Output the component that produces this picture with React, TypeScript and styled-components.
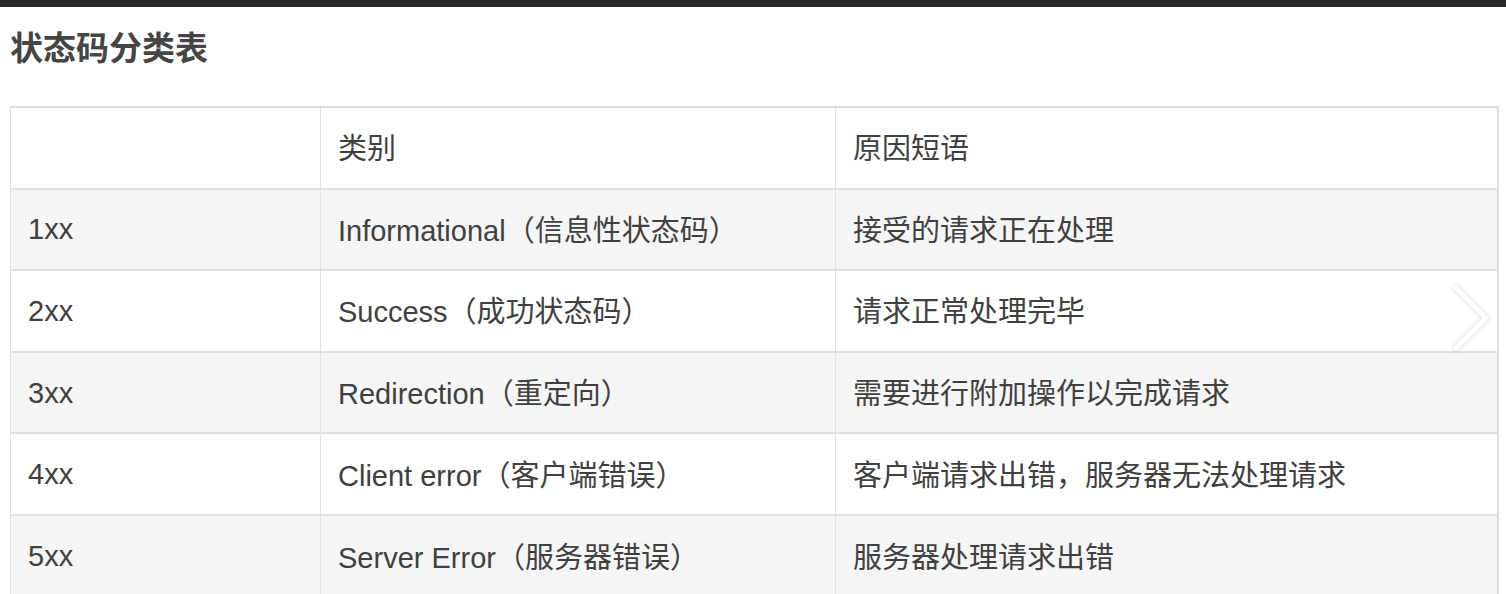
import React from "react";
import styled, { createGlobalStyle } from "styled-components";

const Global = createGlobalStyle`
  html, body { margin: 0; padding: 0; background: #fff; }
  body { font-family: "Liberation Sans", "Noto Sans CJK SC", sans-serif; overflow: hidden; }
`;

const Page = styled.div`
  width: 1506px;
  height: 594px;
  position: relative;
  overflow: hidden;
`;

const TopBar = styled.div`
  height: 7px;
  background: #2b2b2b;
`;

const Title = styled.h2`
  margin: 19px 0 40px 10px;
  font-size: 33px;
  line-height: 40px;
  font-weight: 700;
  color: #454545;
  font-family: "Noto Sans CJK SC", sans-serif;
`;

const TableWrap = styled.div`
  margin-left: 10px;
  width: 1489px;
  position: relative;
`;

const Table = styled.table`
  width: 100%;
  border-collapse: collapse;
  border-top: 2px solid #dedede;
  border-left: 1px solid #dedede;
  border-right: 2px solid #dedede;
  table-layout: fixed;
`;

const Row = styled.tr<{ $alt?: boolean }>`
  height: 81.6px;
  background: ${(p) => (p.$alt ? "#f5f5f5" : "#ffffff")};
  & + & { border-top: 2px solid #e0e0e0; }
`;

const Cell = styled.td`
  padding: 0 0 0 17px;
  border-left: 1px solid #e2e2e2;
  font-size: 29px;
  line-height: 40px;
  color: #404040;
  vertical-align: middle;
  white-space: nowrap;
  font-family: "Liberation Sans", "Noto Sans CJK SC", sans-serif;
  &:first-child { border-left: none; }
`;

const Cjk = styled.span`
  font-family: "Noto Sans CJK SC", sans-serif;
  font-size: 29px;
  line-height: 40px;
`;

const Chevron = styled.svg`
  position: absolute;
  right: 5px;
  top: 177px;
  filter: drop-shadow(0 0 2px rgba(0, 0, 0, 0.18));
`;

const rows = [
  { code: "1xx", en: "Informational", zh: "（信息性状态码）", reason: "接受的请求正在处理" },
  { code: "2xx", en: "Success", zh: "（成功状态码）", reason: "请求正常处理完毕" },
  { code: "3xx", en: "Redirection", zh: "（重定向）", reason: "需要进行附加操作以完成请求" },
  { code: "4xx", en: "Client error", zh: "（客户端错误）", reason: "客户端请求出错，服务器无法处理请求" },
  { code: "5xx", en: "Server Error", zh: "（服务器错误）", reason: "服务器处理请求出错" },
];

export default function App() {
  return (
    <Page>
      <Global />
      <TopBar />
      <Title>状态码分类表</Title>
      <TableWrap>
        <Table>
          <colgroup>
            <col style={{ width: 310 }} />
            <col style={{ width: 515 }} />
            <col />
          </colgroup>
          <tbody>
            <Row>
              <Cell />
              <Cell><Cjk>类别</Cjk></Cell>
              <Cell><Cjk>原因短语</Cjk></Cell>
            </Row>
            {rows.map((r, i) => (
              <Row key={r.code} $alt={i % 2 === 0}>
                <Cell>{r.code}</Cell>
                <Cell>
                  {r.en}
                  <Cjk>{r.zh}</Cjk>
                </Cell>
                <Cell><Cjk>{r.reason}</Cjk></Cell>
              </Row>
            ))}
          </tbody>
        </Table>
        <Chevron width="44" height="70" viewBox="0 0 44 70">
          <polyline
            points="6,5 36,35 6,65"
            fill="none"
            stroke="#ffffff"
            strokeWidth="5"
            strokeLinecap="round"
            strokeLinejoin="round"
          />
        </Chevron>
      </TableWrap>
    </Page>
  );
}
